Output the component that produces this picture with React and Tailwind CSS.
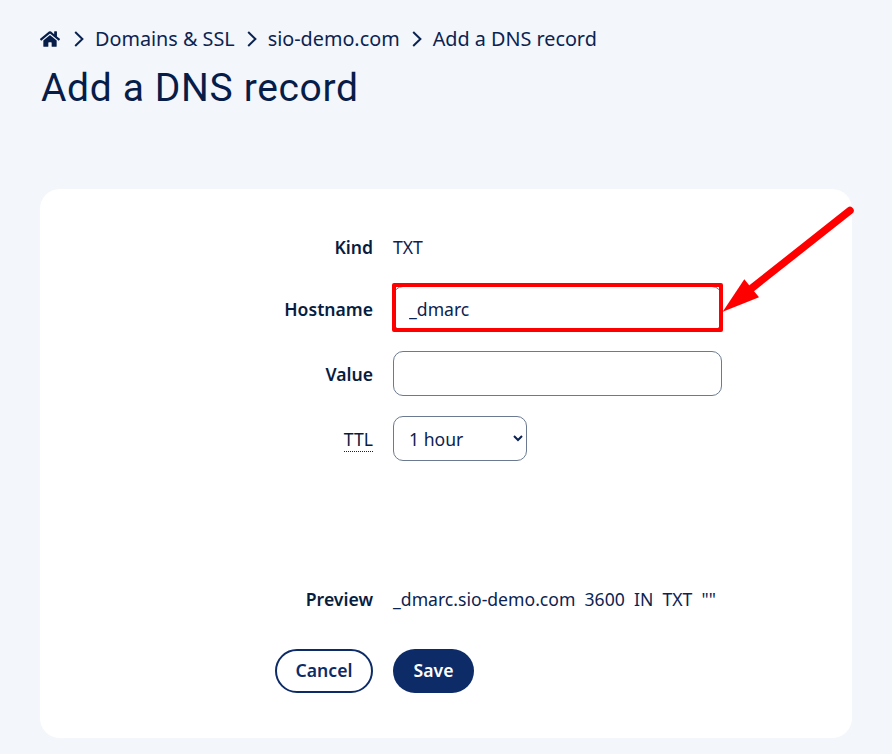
import React from "react";

function Chevron() {
  return (
    <svg width="10" height="16" viewBox="0 0 10 16" fill="none" stroke="#0b2351" strokeWidth="2" className="shrink-0">
      <path d="M1.2 1 L8.4 8 L1.2 15" />
    </svg>
  );
}

function Row({ label, children, className = "", labelClass = "" }) {
  return (
    <div className={"flex items-center gap-5 " + className}>
      <div className={"w-[333px] shrink-0 text-right font-semibold text-[#071d3f] " + labelClass}>{label}</div>
      {children}
    </div>
  );
}

export default function App() {
  return (
    <div className="relative h-[754px] w-[892px] overflow-hidden bg-[#f3f6fa] font-['Noto_Sans','Open_Sans',sans-serif] text-[17.6px] text-[#0b2351]">
      <div className="px-10 pt-[25px]">
        <nav className="flex h-7 items-center text-[19.8px] leading-7 text-[#0b2351]">
          <svg width="20" height="18" viewBox="0 0 576 512" fill="#071d49" className="mr-[14px] shrink-0">
            <path d="M280.4 148.3L96 300.1V464a16 16 0 0 0 16 16l112-.3a16 16 0 0 0 15.9-16V368a16 16 0 0 1 16-16h64a16 16 0 0 1 16 16v95.6a16 16 0 0 0 16 16.1l112 .3a16 16 0 0 0 16-16V300L295.7 148.3a12.2 12.2 0 0 0-15.3 0zM571.6 251.5L488 182.6V44a12 12 0 0 0-12-12h-56a12 12 0 0 0-12 12v72.6L318.5 43a48 48 0 0 0-61 0L4.3 251.5a12 12 0 0 0-1.6 16.9l25.5 31A12 12 0 0 0 45.2 301l235.2-193.7a12.2 12.2 0 0 1 15.3 0L530.9 301a12 12 0 0 0 16.9-1.6l25.5-31a12 12 0 0 0-1.7-16.9z" />
          </svg>
          <Chevron />
          <span className="ml-[11px]">Domains &amp; SSL</span>
          <span className="ml-3"><Chevron /></span>
          <span className="ml-[11px]">sio-demo.com</span>
          <span className="ml-3"><Chevron /></span>
          <span className="ml-[11px]">Add a DNS record</span>
        </nav>
        <h1 className="ml-px mt-[13px] font-['Roboto',sans-serif] text-[39px] leading-[44px] font-normal tracking-[0.64px] text-[#071d49]">Add a DNS record</h1>
      </div>

      <main className="mx-10 mt-[79px] h-[549px] rounded-[20px] bg-white pt-[45px]">
        <Row label="Kind" className="h-[26px]">
          <span className="text-[#0b2351]">TXT</span>
        </Row>
        <Row label="Hostname" labelClass="mt-[2px]" className="mt-[26px]">
          <input readOnly value="_dmarc" className="h-[45px] w-[329px] rounded-[10px] border border-[#6b7a90] bg-white px-[15px] text-[#0b2351] outline-none" />
        </Row>
        <Row label="Value" labelClass="mt-[2px]" className="mt-5">
          <input readOnly value="" className="h-[45px] w-[329px] rounded-[10px] border border-[#6b7a90] bg-white px-[15px] outline-none" />
        </Row>
        <Row label={<span className="border-b border-dotted border-[#0b2351] font-normal">TTL</span>} labelClass="mt-[2px]" className="mt-5">
          <select defaultValue="1 hour" className="h-[45px] w-[134px] rounded-[10px] border border-[#6b7a90] bg-white pl-[11px] text-[#0b2351] outline-none">
            <option>1 hour</option>
          </select>
        </Row>
        <Row label="Preview" className="mt-[125px] h-[26px]">
          <span className="whitespace-pre">_dmarc.sio-demo.com  3600  IN  TXT  ""</span>
        </Row>
        <div className="mt-[37px] flex gap-5 pl-[235px]">
          <button className="h-11 w-[98px] rounded-full border-2 border-[#0d2b66] bg-white pb-[2px] font-semibold text-[#0d2b66]">Cancel</button>
          <button className="h-11 w-[81px] rounded-full bg-[#0d2b66] pb-[2px] font-semibold text-white">Save</button>
        </div>
      </main>

      <div className="pointer-events-none absolute left-[392px] top-[283px] h-[49px] w-[331px] rounded-[2px] border-4 border-[#ff0000]" />
      <svg className="pointer-events-none absolute left-0 top-0" width="892" height="754" fill="none">
        <path d="M850 210.5 L752 288" stroke="#ff0000" strokeWidth="7.5" strokeLinecap="round" />
        <path d="M722.7 311.7 L744.3 279.3 L759 297.3 Z" fill="#ff0000" />
      </svg>
    </div>
  );
}
